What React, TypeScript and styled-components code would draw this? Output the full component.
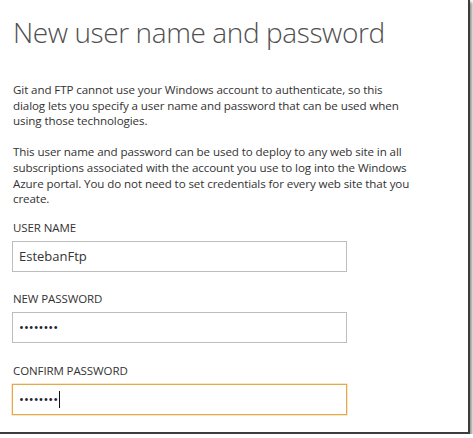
import React from "react";
import styled, { createGlobalStyle } from "styled-components";

const Global = createGlobalStyle`
  html, body { margin: 0; padding: 0; background: #ffffff; }
  body { font-family: "Open Sans", "Noto Sans", "Liberation Sans", sans-serif; }
`;

const Frame = styled.div`
  box-sizing: border-box;
  width: 470px;
  height: 434px;
  background: #ffffff;
  border-right: 2px solid #3c3c3c;
  border-bottom: 2px solid #3c3c3c;
  box-shadow: 2px 2px 3px rgba(0, 0, 0, 0.45);
  padding: 14px 0 0 13px;
  display: flex;
  flex-direction: column;
  overflow: hidden;
`;

const Title = styled.h1`
  margin: 0;
  font-family: "Open Sans", "Noto Sans", sans-serif;
  font-weight: 300;
  font-size: 28px;
  line-height: 36px;
  color: #505050;
  letter-spacing: -0.4px;
  white-space: nowrap;
`;

const Para = styled.p<{ $top: number }>`
  margin: ${(p) => p.$top}px 0 0 0;
  width: 400px;
  font-size: 11.6px;
  line-height: 15.7px;
  color: #333333;
  letter-spacing: -0.1px;
`;

const Field = styled.div<{ $top: number }>`
  margin-top: ${(p) => p.$top}px;
  display: flex;
  flex-direction: column;
  gap: 5px;
`;

const Label = styled.div`
  font-size: 11.5px;
  line-height: 16px;
  color: #333333;
  text-transform: uppercase;
  letter-spacing: -0.1px;
`;

const Box = styled.div<{ $focused?: boolean }>`
  box-sizing: border-box;
  margin-left: -1px;
  width: 335px;
  height: 31px;
  border: 1px solid ${(p) => (p.$focused ? "#e3aa45" : "#bdbdbd")};
  box-shadow: ${(p) => (p.$focused ? "0 0 0 0.5px #f0cf8e" : "none")};
  padding: 0 6px;
  display: flex;
  align-items: center;
  font-size: 13px;
  color: #333333;
  background: #ffffff;
`;

const Dots = styled.span`
  color: #1c2233;
  font-family: "Open Sans", sans-serif;
  font-size: 13px;
  letter-spacing: 0;
`;

const Caret = styled.span`
  display: inline-block;
  width: 1px;
  height: 17px;
  margin-left: 1px;
  background: #111111;
`;

export default function App() {
  return (
    <>
      <Global />
      <Frame>
        <Title>New user name and password</Title>
        <Para $top={32}>
          Git and FTP cannot use your Windows account to authenticate, so this
          dialog lets you specify a user name and password that can be used when
          using those technologies.
        </Para>
        <Para $top={15}>
          This user name and password can be used to deploy to any web site in all
          subscriptions associated with the account you use to log into the Windows
          Azure portal. You do not need to set credentials for every web site that you
          create.
        </Para>
        <Field $top={13}>
          <Label>User Name</Label>
          <Box>EstebanFtp</Box>
        </Field>
        <Field $top={19}>
          <Label>New Password</Label>
          <Box>
            <Dots>••••••••</Dots>
          </Box>
        </Field>
        <Field $top={20}>
          <Label>Confirm Password</Label>
          <Box $focused>
            <Dots>••••••••</Dots>
            <Caret />
          </Box>
        </Field>
      </Frame>
    </>
  );
}
